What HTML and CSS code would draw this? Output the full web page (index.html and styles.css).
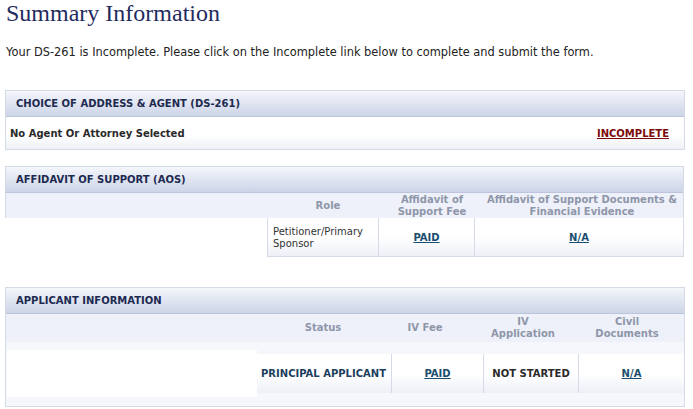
FILE: index.html
```html
<!DOCTYPE html>
<html>
<head>
<meta charset="utf-8">
<link rel="stylesheet" href="styles.css">
</head>
<body>
<h1 class="title">Summary Information</h1>
<p class="intro">Your DS-261 is Incomplete. Please click on the Incomplete link below to complete and submit the form.</p>

<section class="panel panel-agent">
  <div class="panel-head">CHOICE OF ADDRESS &amp; AGENT (DS-261)</div>
  <div class="agent-row">
    <span class="agent-label">No Agent Or Attorney Selected</span>
    <a class="link-incomplete" href="#">INCOMPLETE</a>
  </div>
</section>

<section class="panel panel-aos">
  <div class="panel-head">AFFIDAVIT OF SUPPORT (AOS)</div>
  <div class="aos-colhead">
    <div></div>
    <div class="ch">Role</div>
    <div class="ch">Affidavit of<br>Support Fee</div>
    <div class="ch">Affidavit of Support Documents &amp;<br>Financial Evidence</div>
  </div>
  <div class="aos-data">
    <div class="blank"></div>
    <div class="cell cell-left">Petitioner/Primary<br>Sponsor</div>
    <div class="cell"><a class="link" href="#">PAID</a></div>
    <div class="cell"><a class="link" href="#">N/A</a></div>
  </div>
</section>

<section class="panel panel-app">
  <div class="panel-head">APPLICANT INFORMATION</div>
  <div class="app-colhead">
    <div></div>
    <div class="ch">Status</div>
    <div class="ch">IV Fee</div>
    <div class="ch">IV<br>Application</div>
    <div class="ch">Civil<br>Documents</div>
  </div>
  <div class="app-strip">
    <div class="app-data">
      <div class="blank"></div>
      <div class="cell cell-first strong-blue">PRINCIPAL APPLICANT</div>
      <div class="cell"><a class="link" href="#">PAID</a></div>
      <div class="cell strong-dark">NOT STARTED</div>
      <div class="cell"><a class="link" href="#">N/A</a></div>
    </div>
    <div class="redact"></div>
  </div>
</section>
</body>
</html>
```

FILE: styles.css
```css
html, body {
  margin: 0;
  padding: 0;
  background: #ffffff;
}
body {
  padding: 0 8px 0 5px;
  font-family: "DejaVu Sans", Verdana, sans-serif;
  font-size: 10px;
  color: #222;
}
.title {
  margin: 0 0 0 1px;
  font-family: "Liberation Serif", "Times New Roman", serif;
  font-weight: normal;
  font-size: 24px;
  line-height: 26px;
  color: #1f2b5e;
}
.intro {
  margin: 19px 0 0 1px;
  font-size: 11.4px;
  line-height: 14px;
  color: #222;
}
.panel {
  width: 678px;
  border: 1px solid #d5dae7;
}
.panel-agent { margin-top: 31px; }
.panel-aos { margin-top: 16px; border-left: none; border-bottom: none; }
.panel-app { margin-top: 30px; }

.panel-head {
  height: 25px;
  line-height: 26px;
  padding-left: 10px;
  font-weight: bold;
  font-size: 10px;
  color: #1d2a50;
  background: linear-gradient(#f4f6fb, #ccd4e7);
  border-bottom: 1px solid #bcc5dc;
}
.panel-aos .panel-head { border-left: 1px solid #d5dae7; }

.agent-row {
  height: 32px;
  display: flex;
  align-items: center;
  justify-content: space-between;
  padding: 0 15px 0 4px;
  background: linear-gradient(#ffffff 55%, #eff1f7);
}
.agent-label {
  font-weight: bold;
  color: #2a2a2a;
}
.link-incomplete {
  font-weight: bold;
  color: #7b0b0b;
  text-decoration: underline;
}

.ch {
  text-align: center;
  font-weight: bold;
  color: #8e96aa;
  line-height: 12px;
}

.aos-colhead {
  display: grid;
  grid-template-columns: 266px 112px 96px 204px;
  align-items: center;
  height: 24px;
  padding-top: 1px;
  background: #eef1f9;
  border-left: 1px solid #d5dae7;
}
.aos-data {
  display: grid;
  grid-template-columns: 262px 111px 96px 209px;
  height: 39px;
}
.blank { background: #fff; }
.cell {
  display: flex;
  align-items: center;
  justify-content: center;
  border-left: 1px solid #d5dae7;
  background: linear-gradient(#ffffff 50%, #eef0f7);
  line-height: 12px;
}
.aos-data .cell { border-bottom: 1px solid #d5dae7; padding-top: 2px; }
.cell-left {
  justify-content: flex-start;
  padding-left: 5px;
  color: #333;
}
.link {
  font-weight: bold;
  color: #1b4d6e;
  text-decoration: underline;
}

.app-colhead {
  display: grid;
  grid-template-columns: 266px 102px 102px 94px 114px;
  align-items: center;
  height: 28px;
  background: #eef1f9;
}
.app-strip {
  position: relative;
  padding: 12px 0 13px;
  background: #f6f7fb;
}
.app-data {
  display: grid;
  grid-template-columns: 250px 135px 92px 95px 106px;
  height: 39px;
}
.app-data .blank { background: transparent; }
.app-data .cell-first { border-left: none; }
.strong-blue { font-weight: bold; color: #1d3f5e; }
.strong-dark { font-weight: bold; color: #2a2a2a; }
.redact {
  position: absolute;
  left: 1px;
  top: 8px;
  width: 250px;
  bottom: 9px;
  background: #ffffff;
}
```
